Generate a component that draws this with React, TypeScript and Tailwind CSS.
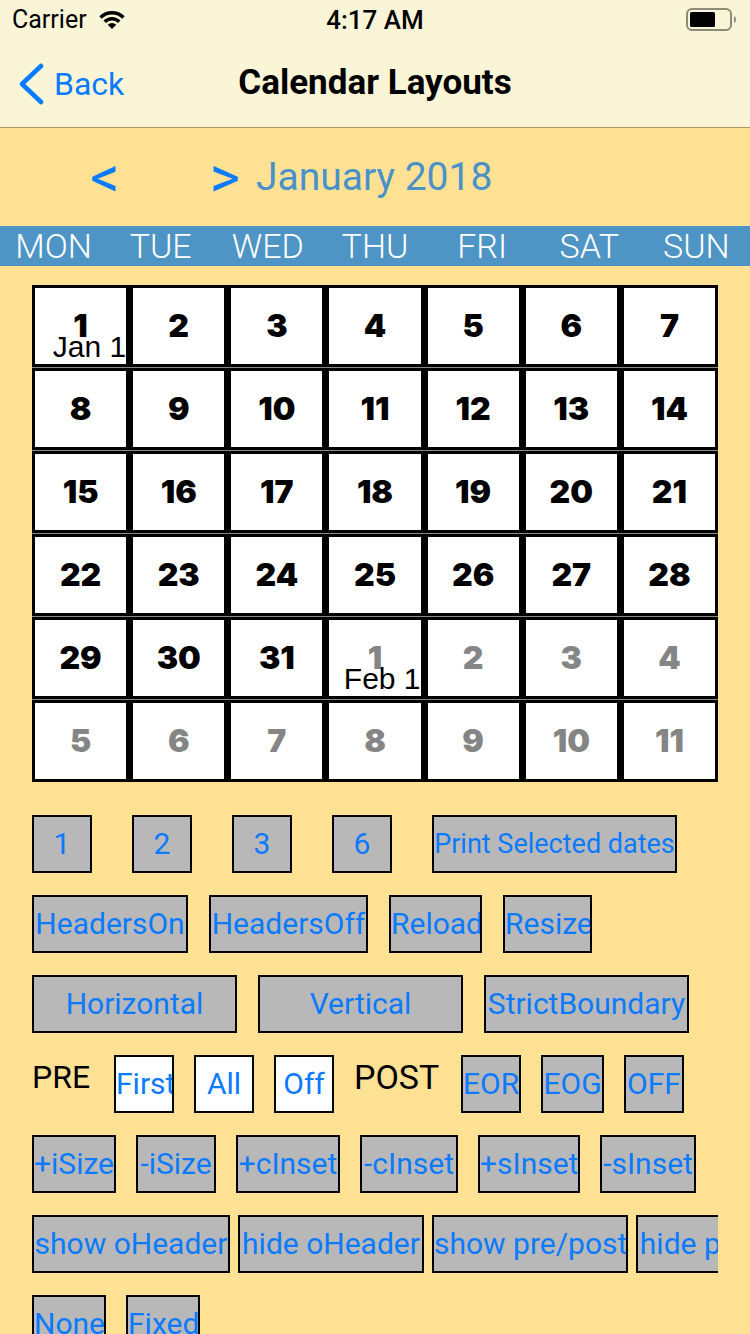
import React from "react";

type Btn = { label: string; w: string; white?: boolean; small?: boolean };

const days = [
  [1, 2, 3, 4, 5, 6, 7],
  [8, 9, 10, 11, 12, 13, 14],
  [15, 16, 17, 18, 19, 20, 21],
  [22, 23, 24, 25, 26, 27, 28],
  [29, 30, 31, 1, 2, 3, 4],
  [5, 6, 7, 8, 9, 10, 11],
];

const weekdays = ["MON", "TUE", "WED", "THU", "FRI", "SAT", "SUN"];

function Button({ label, w, white, small }: Btn) {
  return (
    <div
      className={`${w} h-[58px] shrink-0 overflow-hidden whitespace-nowrap border-2 border-black text-center leading-[54px] text-[#0a7aff] ${
        white ? "bg-white" : "bg-[#b8b8b8]"
      } ${small ? "text-[27px]" : "text-[30px]"}`}
    >
      {label}
    </div>
  );
}

function Wifi() {
  return (
    <svg width="28" height="20" viewBox="0 0 28 20" fill="black">
      <path d="M14 19 L9.76 14.76 A6 6 0 0 1 18.24 14.76 Z" />
      <path d="M5.51 10.51 A12 12 0 0 1 22.49 10.51 L20.01 12.99 A8.5 8.5 0 0 0 7.99 12.99 Z" />
      <path d="M1.27 6.27 A18 18 0 0 1 26.73 6.27 L24.25 8.75 A14.5 14.5 0 0 0 3.75 8.75 Z" />
    </svg>
  );
}

function Battery() {
  return (
    <svg width="52" height="24" viewBox="0 0 52 24">
      <rect x="1" y="1" width="44" height="21" rx="5" fill="none" stroke="#8e8a78" strokeWidth="2" />
      <rect x="4" y="4" width="25" height="15" rx="1.5" fill="black" />
      <path d="M48 8 Q50 8.5 50 11.5 Q50 14.5 48 15 Z" fill="#8e8a78" />
    </svg>
  );
}

export default function App() {
  return (
    <div className="h-[1334px] w-[750px] overflow-hidden bg-[#ffe194] font-[Roboto,sans-serif]">
      {/* status bar */}
      <div className="grid h-[40px] grid-cols-[1fr_auto_1fr] items-center bg-[#faf5d7] text-[25px] text-black">
        <div className="flex items-center gap-[11px] pl-[12px]">
          <span>Carrier</span>
          <Wifi />
        </div>
        <div className="text-[26px] font-medium">4:17 AM</div>
        <div className="flex justify-end pr-[12px]">
          <Battery />
        </div>
      </div>

      {/* nav bar */}
      <div className="grid h-[88px] grid-cols-[1fr_auto_1fr] items-center border-b border-[#a99463] bg-[#faf5d7]">
        <div className="flex items-center gap-[10px] pl-[18px] text-[32px] text-[#0a7aff]">
          <svg width="26" height="42" viewBox="0 0 26 42">
            <polyline points="23,3 4,21 23,39" fill="none" stroke="#0a7aff" strokeWidth="4.5" strokeLinecap="round" strokeLinejoin="round" />
          </svg>
          <span>Back</span>
        </div>
        <div className="text-[35px] font-bold text-black">Calendar Layouts</div>
        <div />
      </div>

      {/* month header */}
      <div className="flex h-[98px] items-center">
        <div className="ml-[88px] w-[34px] text-center text-[58px] leading-none text-[#0a7aff]">&lt;</div>
        <div className="ml-[86px] w-[34px] text-center text-[58px] leading-none text-[#0a7aff]">&gt;</div>
        <div className="ml-[14px] text-[39px] text-[#4a91c9]">January 2018</div>
      </div>

      {/* weekdays */}
      <div className="grid h-[40px] grid-cols-7 items-center bg-[#4e95c5] text-[34px] font-light leading-none text-white">
        {weekdays.map((d) => (
          <div key={d} className="text-center">
            {d}
          </div>
        ))}
      </div>

      {/* calendar grid */}
      <div className="mx-[32px] mt-[19px] flex flex-col gap-px bg-[#8a8a8a]">
        {days.map((row, r) => (
          <div key={r} className="flex gap-px bg-black">
            {row.map((d, c) => {
              const muted = (r === 4 && c >= 3) || r === 5;
              const label = r === 0 && c === 0 ? "Jan 1" : r === 4 && c === 3 ? "Feb 1" : null;
              return (
                <div
                  key={c}
                  className="relative flex h-[82px] flex-1 items-center justify-center overflow-hidden border-[3px] border-black bg-white"
                >
                  <span
                    className={`font-[Inter,sans-serif] text-[32px] font-black ${
                      muted ? "text-[#858585]" : "text-black"
                    }`}
                  >
                    {d}
                  </span>
                  {label && (
                    <span className="absolute bottom-[2px] right-0 whitespace-nowrap font-['Liberation_Sans',sans-serif] text-[30px] leading-none text-black">
                      {label}
                    </span>
                  )}
                </div>
              );
            })}
          </div>
        ))}
      </div>

      {/* controls */}
      <div className="mx-[32px] mt-[33px] flex w-[686px] flex-col gap-[22px] overflow-hidden">
        <div className="flex gap-10">
          <Button label="1" w="w-[60px]" />
          <Button label="2" w="w-[60px]" />
          <Button label="3" w="w-[60px]" />
          <Button label="6" w="w-[60px]" />
          <Button label="Print Selected dates" w="w-[245px]" small />
        </div>
        <div className="flex gap-[21px]">
          <Button label="HeadersOn" w="w-[156px]" />
          <Button label="HeadersOff" w="w-[159px]" />
          <Button label="Reload" w="w-[93px]" />
          <Button label="Resize" w="w-[89px]" />
        </div>
        <div className="flex gap-[21px]">
          <Button label="Horizontal" w="w-[205px]" />
          <Button label="Vertical" w="w-[205px]" />
          <Button label="StrictBoundary" w="w-[205px]" />
        </div>
        <div className="flex gap-5">
          <div className="w-[62px] shrink-0 pt-[2px] text-[32px] leading-[40px] text-black">PRE</div>
          <Button label="First" w="w-[60px]" white />
          <Button label="All" w="w-[60px]" white />
          <Button label="Off" w="w-[60px]" white />
          <div className="w-[87px] shrink-0 pt-[2px] text-[34px] leading-[40px] text-black">POST</div>
          <Button label="EOR" w="w-[60px]" />
          <Button label="EOG" w="w-[63px]" />
          <Button label="OFF" w="w-[60px]" />
        </div>
        <div className="flex gap-5">
          <Button label="+iSize" w="w-[84px]" />
          <Button label="-iSize" w="w-[80px]" />
          <Button label="+cInset" w="w-[104px]" />
          <Button label="-cInset" w="w-[98px]" />
          <Button label="+sInset" w="w-[102px]" />
          <Button label="-sInset" w="w-[96px]" />
        </div>
        <div className="flex gap-2">
          <Button label="show oHeader" w="w-[198px]" />
          <Button label="hide oHeader" w="w-[186px]" />
          <Button label="show pre/post" w="w-[196px]" />
          <Button label="hide pre/post" w="w-[186px]" />
        </div>
        <div className="flex gap-5">
          <Button label="None" w="w-[74px]" />
          <Button label="Fixed" w="w-[74px]" />
        </div>
      </div>
    </div>
  );
}
